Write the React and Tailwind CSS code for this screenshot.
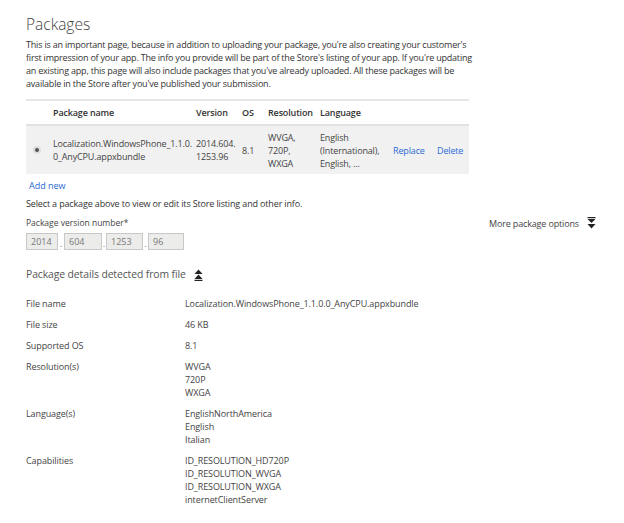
import React from 'react';

const font = { fontFamily: '"Open Sans", "Noto Sans", sans-serif' };

function ChevronsDown() {
  return (
    <svg className="w-[9px] h-[12px]" viewBox="0 0 9 12" fill="#222">
      <rect x="0.5" y="0" width="8" height="1.2" />
      <polygon points="0.5,2 8.5,2 4.5,6" />
      <polygon points="0.5,7 8.5,7 4.5,11.5" />
    </svg>
  );
}

function ChevronsUp() {
  return (
    <svg className="w-[9px] h-[12px]" viewBox="0 0 9 12" fill="#222">
      <polygon points="4.5,0.5 8.5,5 0.5,5" />
      <polygon points="4.5,5.5 8.5,10 0.5,10" />
      <rect x="0.5" y="10.8" width="8" height="1.2" />
    </svg>
  );
}

function VersionBox({ value, w }) {
  return (
    <div className={`${w} h-[17px] border border-[#c8c8c8] bg-[#ececea] text-[#777] text-[9px] leading-[15px] pl-[4px]`}>
      {value}
    </div>
  );
}

function Dot({ w }) {
  return <span className={`${w} text-center leading-[13px] text-[#777]`}>.</span>;
}

const details = [
  ['File name', ['Localization.WindowsPhone_1.1.0.0_AnyCPU.appxbundle']],
  ['File size', ['46 KB']],
  ['Supported OS', ['8.1']],
  ['Resolution(s)', ['WVGA', '720P', 'WXGA']],
  ['Language(s)', ['EnglishNorthAmerica', 'English', 'Italian']],
  ['Capabilities', ['ID_RESOLUTION_HD720P', 'ID_RESOLUTION_WVGA', 'ID_RESOLUTION_WXGA', 'internetClientServer']],
];

export default function App() {
  return (
    <div className="w-[624px] h-[523px] bg-white text-[#333] overflow-hidden" style={font}>
      <div className="pl-[26px] pr-[28px] pt-[13px]">
        <h1 className="text-[15.5px] leading-[22px] font-light text-[#444]">Packages</h1>
        <p className="mt-[3px] whitespace-nowrap text-[9px] leading-[13px] tracking-[-0.2px]">
          This is an important page, because in addition to uploading your package, you're also creating your customer's<br />
          first impression of your app. The info you provide will be part of the Store's listing of your app. If you're updating<br />
          an existing app, this page will also include packages that you've already uploaded. All these packages will be<br />
          available in the Store after you've published your submission.
        </p>

        <div className="mt-[9px] w-[443px] border-t-2 border-[#e6e6e6] text-[9px] tracking-[-0.15px]">
          <div className="grid grid-cols-[27px_143px_46px_26px_52px_73px_44px_1fr] h-[25px] items-center font-semibold text-[#333] border-b-2 border-[#e2e2e2]">
            <div />
            <div>Package name</div>
            <div>Version</div>
            <div>OS</div>
            <div>Resolution</div>
            <div>Language</div>
            <div />
            <div />
          </div>
          <div className="grid grid-cols-[27px_143px_46px_26px_52px_73px_44px_1fr] h-[48px] items-center bg-[#f1f1f1] leading-[13px] text-[#444]">
            <div className="flex pl-[7px]">
              <div className="w-[8px] h-[8px] rounded-full bg-[#dedede] flex items-center justify-center">
                <div className="w-[4px] h-[4px] rounded-full bg-[#555]" />
              </div>
            </div>
            <div>Localization.WindowsPhone_1.1.0.<br />0_AnyCPU.appxbundle</div>
            <div>2014.604.<br />1253.96</div>
            <div>8.1</div>
            <div>WVGA,<br />720P,<br />WXGA</div>
            <div>English<br />(International),<br />English, ...</div>
            <div className="text-[#2a6ad6]">Replace</div>
            <div className="text-[#2a6ad6]">Delete</div>
          </div>
        </div>

        <div className="mt-[5px] ml-[3px] text-[9px] leading-[13px] text-[#2a6ad6]">Add new</div>
        <div className="mt-[5px] text-[9px] leading-[13px] tracking-[-0.15px]">
          Select a package above to view or edit its Store listing and other info.
        </div>

        <div className="mt-[6px] flex justify-between">
          <div>
            <div className="text-[8.5px] leading-[13px] text-[#444]">Package version number*</div>
            <div className="mt-[4px] flex items-end text-[9px]">
              <VersionBox value="2014" w="w-[32px]" />
              <Dot w="w-[6px]" />
              <VersionBox value="604" w="w-[38px]" />
              <Dot w="w-[4px]" />
              <VersionBox value="1253" w="w-[37px]" />
              <Dot w="w-[5px]" />
              <VersionBox value="96" w="w-[36px]" />
            </div>
          </div>
          <div className="flex items-start gap-[8px] pt-[1px] text-[9px] leading-[13px] text-[#444] tracking-[-0.15px]">
            <span>More package options</span>
            <span><ChevronsDown /></span>
          </div>
        </div>

        <div className="mt-[17px] flex items-center gap-[8px] text-[10.4px] leading-[15px] text-[#555] tracking-[-0.1px]">
          <span>Package details detected from file</span>
          <ChevronsUp />
        </div>

        <div className="mt-[15px] flex flex-col gap-[8px] text-[9px] leading-[13px] text-[#444] tracking-[-0.1px]">
          {details.map(([label, values]) => (
            <div key={label} className="flex">
              <div className="w-[159px]">{label}</div>
              <div>
                {values.map((v) => (
                  <div key={v}>{v}</div>
                ))}
              </div>
            </div>
          ))}
        </div>
      </div>
    </div>
  );
}
